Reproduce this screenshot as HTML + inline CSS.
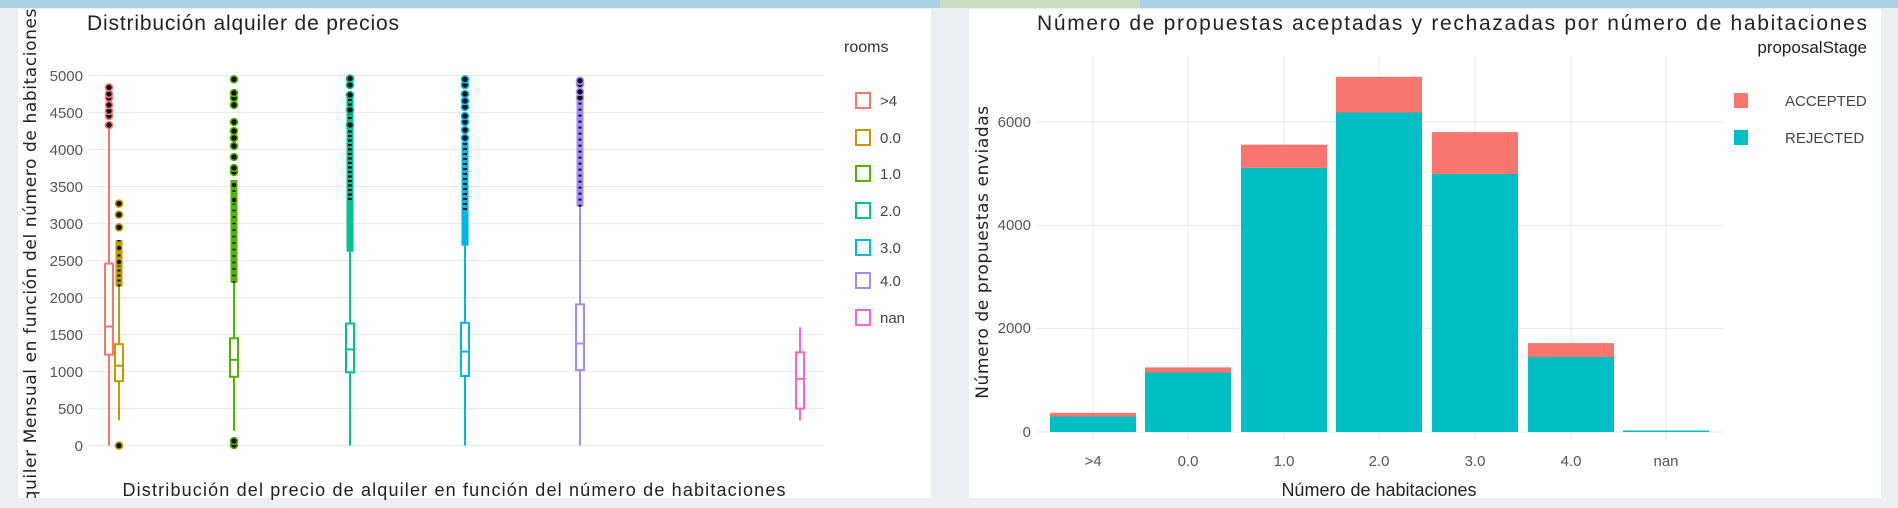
<!DOCTYPE html>
<html><head><meta charset="utf-8"><style>
html,body{margin:0;padding:0;width:1898px;height:508px;overflow:hidden;background:#ebeef3}
svg{display:block}
text{font-family:"Liberation Sans Narrow","Liberation Sans",sans-serif}
</style></head><body>
<svg width="1898" height="508" viewBox="0 0 1898 508">
<rect x="0" y="0" width="1898" height="508" fill="#ebeef3"/>
<rect x="0" y="0" width="1898" height="8" fill="#a9d1e1"/>
<rect x="940" y="0" width="200" height="8" fill="#c8dcc0"/>
<defs><clipPath id="cl"><rect x="18" y="9" width="913" height="489"/></clipPath></defs>
<rect x="18" y="9" width="913" height="489" fill="#fff"/>
<g stroke="#e8e8e8" stroke-width="1">
<line x1="88" x2="824" y1="445.6" y2="445.6"/><line x1="88" x2="824" y1="408.6" y2="408.6"/>
<line x1="88" x2="824" y1="371.6" y2="371.6"/><line x1="88" x2="824" y1="334.6" y2="334.6"/>
<line x1="88" x2="824" y1="297.6" y2="297.6"/><line x1="88" x2="824" y1="260.6" y2="260.6"/>
<line x1="88" x2="824" y1="223.6" y2="223.6"/><line x1="88" x2="824" y1="186.6" y2="186.6"/>
<line x1="88" x2="824" y1="149.6" y2="149.6"/><line x1="88" x2="824" y1="112.6" y2="112.6"/>
<line x1="88" x2="824" y1="75.6" y2="75.6"/>
</g>
<g font-size="15" fill="#555" text-anchor="end">
<text x="83" y="451">0</text><text x="83" y="414">500</text><text x="83" y="377">1000</text>
<text x="83" y="340">1500</text><text x="83" y="303">2000</text><text x="83" y="266">2500</text>
<text x="83" y="229">3000</text><text x="83" y="192">3500</text><text x="83" y="155">4000</text>
<text x="83" y="118">4500</text><text x="83" y="81">5000</text>
</g>
<text x="87" y="30" font-size="21" fill="#222" textLength="312">Distribución alquiler de precios</text>
<g clip-path="url(#cl)"><text transform="translate(36,8) rotate(-90)" text-anchor="end" font-size="17" fill="#222" style="font-family:'DejaVu Sans',sans-serif" letter-spacing="0.6">Precio alquiler Mensual en función del número de habitaciones</text></g>
<text x="454" y="496" font-size="18" fill="#222" text-anchor="middle" textLength="663">Distribución del precio de alquiler en función del número de habitaciones</text>
<g fill="none" stroke-width="2">
<g stroke="#F8766D"><line x1="109" x2="109" y1="445.6" y2="125"/><rect x="105" y="263.6" width="8" height="91" fill="#fff"/><line x1="105" x2="113" y1="326.5" y2="326.5"/></g>
<g stroke="#C49A00"><line x1="119" x2="119" y1="420.4" y2="286.5"/><rect x="115" y="344.2" width="8" height="37" fill="#fff"/><line x1="115" x2="123" y1="365.7" y2="365.7"/></g>
<g stroke="#53B400"><line x1="234" x2="234" y1="430.8" y2="282.8"/><rect x="230" y="338.3" width="8" height="38.5" fill="#fff"/><line x1="230" x2="238" y1="359.8" y2="359.8"/></g>
<g stroke="#00C094"><line x1="350" x2="350" y1="445.6" y2="251.7"/><rect x="346" y="323.5" width="8" height="48.8" fill="#fff"/><line x1="346" x2="354" y1="349.4" y2="349.4"/></g>
<g stroke="#00B6EB"><line x1="465" x2="465" y1="445.6" y2="245.8"/><rect x="461" y="322.8" width="8" height="53.2" fill="#fff"/><line x1="461" x2="469" y1="351.6" y2="351.6"/></g>
<g stroke="#A58AFF"><line x1="580" x2="580" y1="445.6" y2="206.6"/><rect x="576" y="304.3" width="8" height="65.8" fill="#fff"/><line x1="576" x2="584" y1="343.5" y2="343.5"/></g>
<g stroke="#FB61D7"><line x1="800" x2="800" y1="420.4" y2="327.2"/><rect x="796" y="352.4" width="8" height="56.2" fill="#fff"/><line x1="796" x2="804" y1="378.9" y2="378.9"/></g>
</g>
<g>
<line x1="119" x2="119" y1="286.5" y2="240" stroke="#C49A00" stroke-width="7"/><line x1="119" x2="119" y1="286.5" y2="240" stroke="#111" stroke-width="3" stroke-dasharray="2 3"/>
<line x1="234" x2="234" y1="282.8" y2="180" stroke="#53B400" stroke-width="7"/><line x1="234" x2="234" y1="282.8" y2="180" stroke="#111" stroke-width="3" stroke-dasharray="1.5 5"/>
<line x1="350" x2="350" y1="251.7" y2="92" stroke="#00C094" stroke-width="7"/><line x1="350" x2="350" y1="200" y2="92" stroke="#111" stroke-width="4" stroke-dasharray="2 2.5"/>
<line x1="465" x2="465" y1="245.8" y2="142" stroke="#00B6EB" stroke-width="7"/><line x1="465" x2="465" y1="210" y2="142" stroke="#111" stroke-width="4" stroke-dasharray="2 3"/>
<line x1="580" x2="580" y1="206.6" y2="101" stroke="#A58AFF" stroke-width="7"/><line x1="580" x2="580" y1="206.6" y2="101" stroke="#111" stroke-width="3" stroke-dasharray="2 4"/>
</g>
<g stroke-width="1.6" fill="#111">
<g stroke="#F8766D"><circle cx="109" cy="125" r="3.5"/><circle cx="109" cy="116" r="3.5"/><circle cx="109" cy="111" r="3.5"/><circle cx="109" cy="105" r="3.5"/><circle cx="109" cy="98" r="3.5"/><circle cx="109" cy="94" r="3.5"/><circle cx="109" cy="87.4" r="3.5"/></g>
<g stroke="#C49A00"><circle cx="119" cy="227.3" r="3.5"/><circle cx="119" cy="214.7" r="3.5"/><circle cx="119" cy="203.6" r="3.5"/><circle cx="119" cy="445.6" r="3.5"/><circle cx="119" cy="248" r="3"/><circle cx="119" cy="262" r="3"/></g>
<g stroke="#53B400"><circle cx="234" cy="172" r="3.5"/><circle cx="234" cy="168" r="3.5"/><circle cx="234" cy="157" r="3.5"/><circle cx="234" cy="146" r="3.5"/><circle cx="234" cy="138" r="3.5"/><circle cx="234" cy="131" r="3.5"/><circle cx="234" cy="122" r="3.5"/><circle cx="234" cy="105" r="3.5"/><circle cx="234" cy="98" r="3.5"/><circle cx="234" cy="93" r="3.5"/><circle cx="234" cy="79.3" r="3.5"/><circle cx="234" cy="445" r="3.5"/><circle cx="234" cy="441" r="3.5"/><circle cx="234" cy="185" r="3"/><circle cx="234" cy="200" r="3"/></g>
<g stroke="#00C094"><circle cx="350" cy="85" r="3.5"/><circle cx="350" cy="78.6" r="3.5"/><circle cx="350" cy="110" r="3.5"/><circle cx="350" cy="125" r="3.5"/><circle cx="350" cy="95" r="3.5"/></g>
<g stroke="#00B6EB"><circle cx="465" cy="138" r="3.5"/><circle cx="465" cy="130" r="3.5"/><circle cx="465" cy="122" r="3.5"/><circle cx="465" cy="116" r="3.5"/><circle cx="465" cy="107" r="3.5"/><circle cx="465" cy="101" r="3.5"/><circle cx="465" cy="94" r="3.5"/><circle cx="465" cy="85" r="3.5"/><circle cx="465" cy="79.3" r="3.5"/></g>
<g stroke="#A58AFF"><circle cx="580" cy="97.7" r="3.5"/><circle cx="580" cy="91.8" r="3.5"/><circle cx="580" cy="84.4" r="3.5"/><circle cx="580" cy="80.8" r="3.5"/></g>
</g>
<text x="844" y="52" font-size="16" fill="#333">rooms</text>
<g fill="#fff" stroke-width="2">
<rect x="856" y="93" width="14" height="15" stroke="#F8766D"/>
<rect x="856" y="130" width="14" height="15" stroke="#C49A00"/>
<rect x="856" y="166" width="14" height="15" stroke="#53B400"/>
<rect x="856" y="203" width="14" height="15" stroke="#00C094"/>
<rect x="856" y="240" width="14" height="15" stroke="#00B6EB"/>
<rect x="856" y="273" width="14" height="15" stroke="#A58AFF"/>
<rect x="856" y="310" width="14" height="15" stroke="#FB61D7"/>
</g>
<g font-size="15" fill="#444">
<text x="880" y="106">&gt;4</text><text x="880" y="143">0.0</text><text x="880" y="179">1.0</text>
<text x="880" y="216">2.0</text><text x="880" y="253">3.0</text><text x="880" y="286">4.0</text><text x="880" y="323">nan</text>
</g>
<rect x="969" y="9" width="912" height="489" fill="#fff"/>
<g stroke="#e8e8e8" stroke-width="1">
<line x1="1036" x2="1724" y1="432" y2="432"/><line x1="1036" x2="1724" y1="328.6" y2="328.6"/>
<line x1="1036" x2="1724" y1="225.2" y2="225.2"/><line x1="1036" x2="1724" y1="121.8" y2="121.8"/>
<line x1="1093" x2="1093" y1="56" y2="440"/><line x1="1188" x2="1188" y1="56" y2="440"/>
<line x1="1284" x2="1284" y1="56" y2="440"/><line x1="1379" x2="1379" y1="56" y2="440"/>
<line x1="1475" x2="1475" y1="56" y2="440"/><line x1="1571" x2="1571" y1="56" y2="440"/>
<line x1="1666" x2="1666" y1="56" y2="440"/>
</g>
<g font-size="15" fill="#555" text-anchor="end">
<text x="1031" y="437">0</text><text x="1031" y="333">2000</text><text x="1031" y="230">4000</text><text x="1031" y="127">6000</text>
</g>
<g fill="#00BFC4">
<rect x="1050" y="416.5" width="86" height="15.5"/>
<rect x="1145" y="372.5" width="86" height="59.5"/>
<rect x="1241" y="167.8" width="86" height="264.2"/>
<rect x="1336" y="112.5" width="86" height="319.5"/>
<rect x="1432" y="174" width="86" height="258"/>
<rect x="1528" y="357" width="86" height="75"/>
<rect x="1623" y="430.5" width="86" height="1.5"/>
</g>
<g fill="#F8766D">
<rect x="1050" y="412.9" width="86" height="3.6"/>
<rect x="1145" y="367.4" width="86" height="5.1"/>
<rect x="1241" y="144.6" width="86" height="23.2"/>
<rect x="1336" y="76.8" width="86" height="35.7"/>
<rect x="1432" y="132.1" width="86" height="41.9"/>
<rect x="1528" y="343.1" width="86" height="13.9"/>
</g>
<g font-size="15" fill="#555" text-anchor="middle">
<text x="1093" y="466">&gt;4</text><text x="1188" y="466">0.0</text><text x="1284" y="466">1.0</text>
<text x="1379" y="466">2.0</text><text x="1475" y="466">3.0</text><text x="1571" y="466">4.0</text><text x="1666" y="466">nan</text>
</g>
<text x="1379" y="496" font-size="18" fill="#222" text-anchor="middle">Número de habitaciones</text>
<text transform="translate(988,252) rotate(-90)" text-anchor="middle" font-size="17" fill="#222" style="font-family:'DejaVu Sans',sans-serif" letter-spacing="0.6">Número de propuestas enviadas</text>
<text x="1867" y="30" font-size="21" fill="#222" text-anchor="end" textLength="830">Número de propuestas aceptadas y rechazadas por número de habitaciones</text>
<text x="1867" y="53" font-size="17" fill="#222" text-anchor="end">proposalStage</text>
<rect x="1734" y="93" width="14" height="15" fill="#F8766D"/>
<rect x="1734" y="130" width="14" height="15" fill="#00BFC4"/>
<g font-size="15" fill="#444"><text x="1785" y="106">ACCEPTED</text><text x="1785" y="143">REJECTED</text></g>
</svg>
</body></html>
